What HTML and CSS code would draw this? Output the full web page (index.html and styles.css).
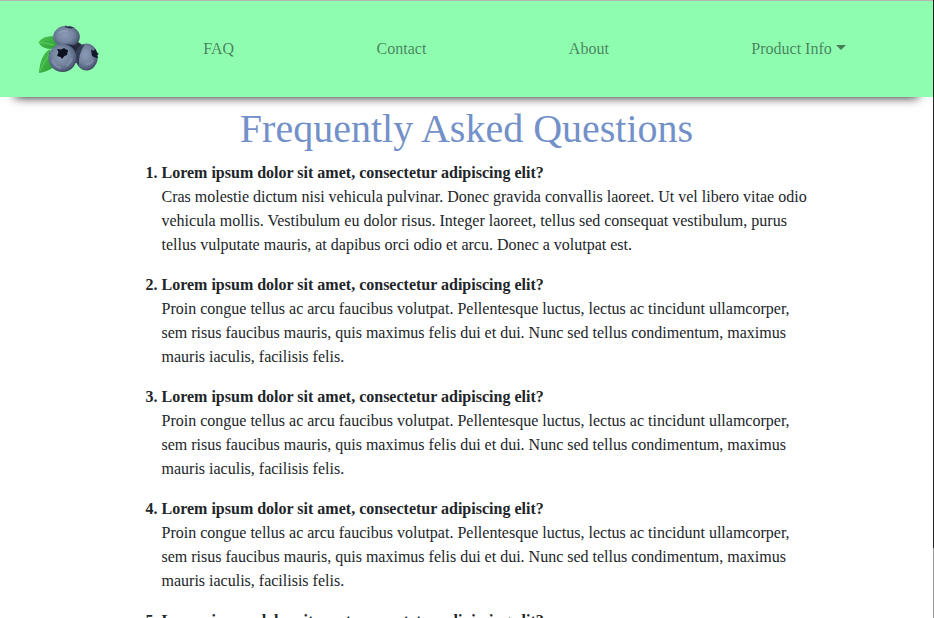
FILE: index.html
```html
<!DOCTYPE html>
<html lang="en">
<head>
<meta charset="utf-8">
<title>Frequently Asked Questions</title>
<link rel="stylesheet" href="styles.css">
</head>
<body>
<header class="navbar">
  <a class="brand" href="#" aria-label="Home">
    <svg class="logo" viewBox="0 0 80 64" aria-hidden="true">
      <defs>
        <radialGradient id="berry" cx=".45" cy=".42" r=".62">
          <stop offset="0" stop-color="#8b9ab8"/>
          <stop offset=".5" stop-color="#76869f"/>
          <stop offset=".8" stop-color="#566480"/>
          <stop offset="1" stop-color="#333c50"/>
        </radialGradient>
        <linearGradient id="leaf" x1="0" y1="0" x2="1" y2="1">
          <stop offset="0" stop-color="#4cc552"/>
          <stop offset="1" stop-color="#2b9e35"/>
        </linearGradient>
      </defs>
      <path d="M8.500 25Q13 19 23 19L28 29L21 32Q11 32 8.500 25Z" fill="url(#leaf)"/>
      <path d="M20 32Q10 38 9 56Q17 55 24 50Z" fill="url(#leaf)"/>
      <path d="M9 25L24 28M10 54Q14 44 20 37" fill="none" stroke="#6cd45e" stroke-width=".7"/>
      <path d="M34 29L48 25L54 29L50 46L45 46Z" fill="#252b3b"/>
      <ellipse cx="36.500" cy="19.800" rx="13.300" ry="11" fill="url(#berry)"/>
      <path d="M29 28.500Q37 26 46 29L43 33Z" fill="#20283c"/>
      <path d="M35 10L35 8.500L37 10L40 9.300L42 10L44 10L42 11.500L37 11Z" fill="#28324a"/>
      <ellipse cx="56.500" cy="40" rx="11.200" ry="13.500" fill="url(#berry)"/>
      <path d="M50 29Q45 32 46 42Q47 47 49 49Q48 37 55 27Z" fill="#202940" opacity=".75"/>
      <path d="M61 32.500L64 34L65 31.500L67 35.500L69 37L67 38L68 41L65 40.500L62 39Z" fill="#131a2a"/>
      <circle cx="32.500" cy="41" r="14" fill="url(#berry)"/>
      <path d="M27 32L31 32.500L34 31L36 32.500L38 33L37 38L34.500 39L32 42L30.500 40L27 39L28.500 35Z" fill="#0d111e"/>
      <path d="M22 43Q25 50 31 51M36 49Q41 46 42 41M29 16Q33 13 38 14M56 47Q61 48 63 43" fill="none" stroke="#a7b6d4" stroke-width="2" opacity=".35"/>
    </svg>
  </a>
  <nav class="nav" aria-label="Main">
    <a class="nav-link" href="#faq">FAQ</a>
    <a class="nav-link" href="#contact">Contact</a>
    <a class="nav-link" href="#about">About</a>
    <button class="nav-link dropdown" type="button" aria-haspopup="true">Product Info</button>
  </nav>
</header>
<main class="container" id="faq">
  <h1 class="title">Frequently Asked Questions</h1>
  <ol class="questions">
    <li>
      <strong>Lorem ipsum dolor sit amet, consectetur adipiscing elit?</strong>
      <p>Cras molestie dictum nisi vehicula pulvinar. Donec gravida convallis laoreet. Ut vel libero vitae odio vehicula mollis. Vestibulum eu dolor risus. Integer laoreet, tellus sed consequat vestibulum, purus tellus vulputate mauris, at dapibus orci odio et arcu. Donec a volutpat est.</p>
    </li>
    <li>
      <strong>Lorem ipsum dolor sit amet, consectetur adipiscing elit?</strong>
      <p>Proin congue tellus ac arcu faucibus volutpat. Pellentesque luctus, lectus ac tincidunt ullamcorper, sem risus faucibus mauris, quis maximus felis dui et dui. Nunc sed tellus condimentum, maximus mauris iaculis, facilisis felis.</p>
    </li>
    <li>
      <strong>Lorem ipsum dolor sit amet, consectetur adipiscing elit?</strong>
      <p>Proin congue tellus ac arcu faucibus volutpat. Pellentesque luctus, lectus ac tincidunt ullamcorper, sem risus faucibus mauris, quis maximus felis dui et dui. Nunc sed tellus condimentum, maximus mauris iaculis, facilisis felis.</p>
    </li>
    <li>
      <strong>Lorem ipsum dolor sit amet, consectetur adipiscing elit?</strong>
      <p>Proin congue tellus ac arcu faucibus volutpat. Pellentesque luctus, lectus ac tincidunt ullamcorper, sem risus faucibus mauris, quis maximus felis dui et dui. Nunc sed tellus condimentum, maximus mauris iaculis, facilisis felis.</p>
    </li>
    <li>
      <strong>Lorem ipsum dolor sit amet, consectetur adipiscing elit?</strong>
      <p>Proin congue tellus ac arcu faucibus volutpat. Pellentesque luctus, lectus ac tincidunt ullamcorper, sem risus faucibus mauris, quis maximus felis dui et dui. Nunc sed tellus condimentum, maximus mauris iaculis, facilisis felis.</p>
    </li>
  </ol>
</main>
</body>
</html>
```
FILE: styles.css
```css
*, *::before, *::after {
  box-sizing: border-box;
}

html {
  scrollbar-width: none;
}

body {
  margin: 0;
  padding-right: 1px;
  border-top: 1px solid #b4b4b4;
  background: #fff;
  color: #212529;
  font: 16px/24px "Liberation Serif", "Times New Roman", serif;
}

/* Window edge */
body::after {
  content: "";
  position: fixed;
  inset: 0 0 0 auto;
  width: 1px;
  background: linear-gradient(#222 548px, #999 548px);
}

.navbar {
  display: flex;
  align-items: center;
  padding: 8px 16px;
  background: #8ffdb0;
  box-shadow: 0 15px 10px -15px #111;
}

.brand {
  display: block;
  margin: 8px 22px 8px 14px;
}

.logo {
  display: block;
  width: 80px;
  height: 64px;
}

.nav {
  display: flex;
  flex: 1 1 auto;
}

.nav-link {
  flex: 1 1 auto;
  padding: 8px;
  border: 0;
  background: none;
  color: rgba(0, 0, 0, 0.5);
  font: inherit;
  text-align: center;
  text-decoration: none;
}

.dropdown::after {
  content: "";
  display: inline-block;
  margin-left: 4px;
  vertical-align: 4px;
  border: 5px solid transparent;
  border-top-color: currentColor;
  border-bottom: 0;
}

.container {
  max-width: 720px;
  margin: 0 auto;
  padding: 8px 15px;
}

.title {
  margin: 0 0 8px;
  color: #7391c8;
  font-size: 40px;
  font-weight: 400;
  line-height: 48px;
  text-align: center;
}

.questions {
  margin: 0;
  padding-left: 40px;
  font-weight: 700;
}

.questions p {
  margin: 0 0 16px;
  font-weight: 400;
}
```
